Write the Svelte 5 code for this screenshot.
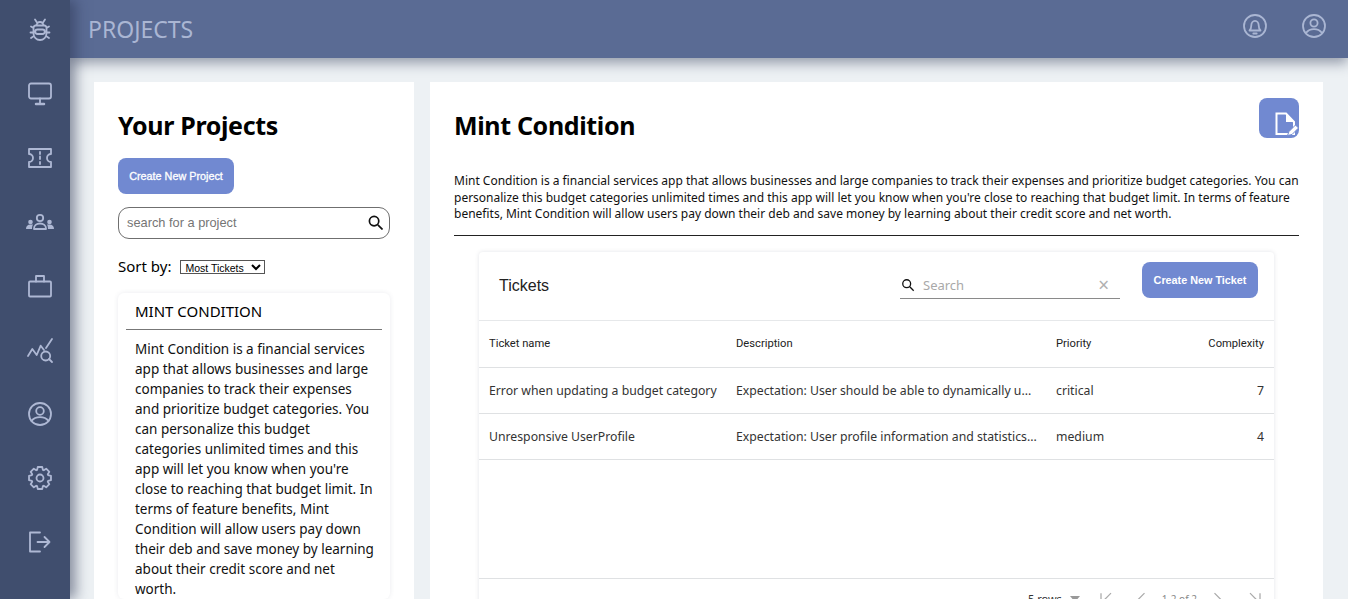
<script>
  const tickets = [
    { name: 'Error when updating a budget category', desc: 'Expectation: User should be able to dynamically u...', priority: 'critical', complexity: 7 },
    { name: 'Unresponsive UserProfile', desc: 'Expectation: User profile information and statistics...', priority: 'medium', complexity: 4 }
  ];
  const about = "Mint Condition is a financial services app that allows businesses and large companies to track their expenses and prioritize budget categories. You can personalize this budget categories unlimited times and this app will let you know when you're close to reaching that budget limit. In terms of feature benefits, Mint Condition will allow users pay down their deb and save money by learning about their credit score and net worth.";

  // eight toothed cog outline, centred on 12,12
  function cog() {
    const pts = [];
    for (let i = 0; i < 8; i++) {
      const a = (i * Math.PI) / 4 - Math.PI / 2;
      for (const [off, r] of [[-0.34, 8.6], [-0.2, 11.2], [0.2, 11.2], [0.34, 8.6]]) {
        pts.push(`${(12 + r * Math.cos(a + off)).toFixed(2)} ${(12 + r * Math.sin(a + off)).toFixed(2)}`);
      }
    }
    return 'M' + pts.join('L') + 'Z';
  }
</script>

<div class="shell">
  <nav class="side">
    <!-- bug -->
    <svg viewBox="0 0 24 24"><path d="M7.500 7.500h9a2.500 2.500 0 0 1 2 2.500v5.500a6.500 6.500 0 0 1-13 0V10a2.500 2.500 0 0 1 2-2.500zM8.500 7.500a3.500 3.500 0 0 1 7 0M9.500 11.500h5a1 1 0 0 1 0 4.500h-5a1 1 0 0 1 0-4.500zM9 4.500 7 1.500M15 4.500l2-3M5.500 10 3 8.500M18.500 10 21 8.500M5.500 14.500H2.500M18.500 14.500h3M6 18l-3 2M18 18l3 2"/></svg>
    <!-- monitor -->
    <svg viewBox="0 0 24 24"><rect x="1" y="1.500" width="22" height="15" rx="2"/><path d="M12 16.500V22"/><path class="thick" d="M8 22h8"/></svg>
    <!-- ticket -->
    <svg viewBox="0 0 24 24"><path d="M1 3h22v5a4 4 0 0 0 0 8v5H1v-5a4 4 0 0 0 0-8zM12 6v2M12 10.500V13M12 16v2"/></svg>
    <!-- team -->
    <svg viewBox="0 0 24 24"><circle cx="12" cy="8" r="3.200"/><path d="M6 19v-.5c0-3 2.500-5 6-5s6 2 6 5v.5z"/><circle class="fill" cx="2.500" cy="12" r="2.300"/><circle class="fill" cx="21.500" cy="12" r="2.300"/><path class="fill" d="M-2 19c0-2.800 1.700-4.500 4.500-4.500h2.500c-.7 1.200-1 2.800-1 4.500zM26 19c0-2.800-1.700-4.500-4.500-4.500H19c.7 1.200 1 2.800 1 4.500z"/></svg>
    <!-- briefcase -->
    <svg viewBox="0 0 24 24"><rect x="1" y="7.500" width="22" height="15" rx="1"/><path d="M8 7.500V2h8v5.500"/></svg>
    <!-- stats search -->
    <svg viewBox="0 0 24 24"><path d="M0 18 4.300 11l4.400 6 4-9.300L16 12M18 10l6-9"/><circle cx="17.700" cy="18" r="4.500"/><path d="m21 21 3 3"/></svg>
    <!-- profile -->
    <svg viewBox="0 0 24 24"><circle cx="12" cy="12" r="11"/><circle cx="12" cy="9" r="3.800"/><path d="M3.500 19c2-2.600 5-3.800 8.500-3.800s6.500 1.200 8.500 3.800"/></svg>
    <!-- gear -->
    <svg viewBox="0 0 24 24"><circle cx="12" cy="12" r="3.500"/><path d={cog()}/></svg>
    <!-- logout -->
    <svg viewBox="0 0 24 24"><path d="M12 2.500H2v19h10M9.500 12h12M16.500 7l5 5-5 5"/></svg>
  </nav>

  <div class="main">
    <header class="top">
      <span class="title">PROJECTS</span>
      <div class="top-icons">
        <svg viewBox="0 0 24 24"><circle cx="12" cy="12" r="11"/><path d="M6.500 16.500c1-1 1.800-2 1.800-5 0-2.500 1.500-4.700 3.700-4.700s3.700 2.200 3.700 4.700c0 3 .8 4 1.800 5zM10.300 19.500h3.400"/></svg>
        <svg viewBox="0 0 24 24"><circle cx="12" cy="12" r="11"/><circle cx="12" cy="9" r="3.600"/><path d="M4 19c2-2.600 4.700-3.800 8-3.800s6 1.200 8 3.800"/></svg>
      </div>
    </header>

    <div class="content">
      <section class="card left">
        <h1>Your Projects</h1>
        <button class="btn">Create New Project</button>
        <div class="search-box">
          <span>search for a project</span>
          <svg viewBox="0 0 16 16"><circle cx="6.500" cy="6.500" r="5"/><path d="m10.500 10.500 5 5"/></svg>
        </div>
        <div class="sort">
          <span>Sort by:</span>
          <select><option>Most Tickets</option></select>
        </div>
        <article class="project">
          <h2>MINT CONDITION</h2>
          <p>{about}</p>
        </article>
      </section>

      <section class="card right">
        <div class="head">
          <h1>Mint Condition</h1>
          <div class="edit">
            <svg viewBox="0 0 40 40"><path class="page" d="M17.500 15.500h9.500l8 8.500v12H17.500z"/><path class="fold" d="M27 15.500V24h8z"/><path class="pen" d="m28.500 37.500 1.500-4 6.500-6.500 3 3-6.500 6.500z"/></svg>
          </div>
        </div>
        <p class="about">{about}</p>
        <div class="table-card">
          <div class="bar">
            <span class="tickets">Tickets</span>
            <div class="t-search">
              <svg viewBox="0 0 16 16"><circle cx="6.500" cy="6.500" r="4.500"/><path d="m10 10 4.500 4.500"/></svg>
              <span>Search</span>
              <i>×</i>
            </div>
            <button class="btn wide">Create New Ticket</button>
          </div>
          <div class="row hdr">
            <span>Ticket name</span><span>Description</span><span>Priority</span><span class="num">Complexity</span>
          </div>
          {#each tickets as t}
            <div class="row">
              <span>{t.name}</span><span>{t.desc}</span><span>{t.priority}</span><span class="num">{t.complexity}</span>
            </div>
          {/each}
          <div class="empty"></div>
          <div class="pager">
            <span>5 rows</span>
            <svg class="caret" viewBox="0 0 10 6"><path d="M0 0h10L5 6z"/></svg>
            <svg class="first" viewBox="0 0 24 24"><path d="M6 5v14M18 5l-7 7 7 7"/></svg>
            <svg class="prev" viewBox="0 0 24 24"><path d="m15 5-7 7 7 7"/></svg>
            <span class="count">1-2 of 2</span>
            <svg class="next" viewBox="0 0 24 24"><path d="m9 5 7 7-7 7"/></svg>
            <svg class="last" viewBox="0 0 24 24"><path d="M18 5v14M6 5l7 7-7 7"/></svg>
          </div>
        </div>
      </section>
    </div>
  </div>
</div>

<style>
  :global(body) {
    margin: 0;
    overflow: hidden;
  }

  .shell {
    display: flex;
    height: 599px;
    overflow: hidden;
    font-family: "Noto Sans", "Open Sans", sans-serif;
    color: #000;
  }

  .side {
    position: relative;
    z-index: 2;
    flex: 0 0 70px;
    box-sizing: border-box;
    background: #404e6e;
    display: flex;
    flex-direction: column;
    align-items: center;
    gap: 40px;
    padding: 18px 0 0 10px;
    box-shadow: 6px 0 12px rgba(40, 50, 80, 0.5);
  }

  .side svg {
    flex: 0 0 24px;
    width: 24px;
    height: 24px;
    fill: none;
    stroke: #aeb8d4;
    stroke-width: 1.800;
    stroke-linecap: round;
    stroke-linejoin: round;
    overflow: visible;
  }

  .side svg .fill {
    fill: #aeb8d4;
    stroke: none;
  }

  .side svg .thick {
    stroke-width: 2.500;
  }

  .main {
    flex: 1;
    min-width: 0;
    display: flex;
    flex-direction: column;
    background: #edf1f4;
  }

  .top {
    position: relative;
    z-index: 1;
    flex: 0 0 58px;
    box-sizing: border-box;
    background: #5a6b94;
    display: flex;
    align-items: flex-start;
    justify-content: space-between;
    padding: 14px 22px 0 18px;
    box-shadow: 0 5px 12px rgba(40, 50, 80, 0.45);
  }

  .title {
    color: #aab6d3;
    font-size: 23px;
    line-height: 31px;
  }

  .top-icons {
    display: flex;
    gap: 35px;
  }

  .top-icons svg {
    width: 24px;
    height: 24px;
    fill: none;
    stroke: #aab6d3;
    stroke-width: 1.800;
    stroke-linecap: round;
    stroke-linejoin: round;
  }

  .content {
    flex: 1;
    min-height: 0;
    display: flex;
    align-items: flex-start;
    gap: 16px;
    padding: 24px 25px 0 24px;
  }

  .card {
    background: #fff;
    height: 700px;
    box-sizing: border-box;
  }

  .left {
    flex: 0 0 320px;
    padding: 25px 24px 0;
  }

  .right {
    flex: 1;
    min-width: 0;
    padding: 16px 24px 0;
  }

  h1 {
    margin: 0;
    font-size: 25px;
    letter-spacing: -0.35px;
    line-height: 36px;
    font-weight: 700;
  }

  .btn {
    display: block;
    flex: 0 0 auto;
    border: 0;
    border-radius: 8px;
    background: #7189d1;
    color: #fff;
    font-family: "Liberation Sans", sans-serif;
    font-size: 10.800px;
    font-weight: 700;
    width: 116px;
    height: 36px;
    padding: 0;
  }

  .left .btn {
    margin-top: 15px;
    font-weight: 400;
    -webkit-text-stroke: 0.3px #fff;
  }

  .search-box {
    margin-top: 13px;
    width: 272px;
    height: 32px;
    border: 1px solid #6f6f6f;
    border-radius: 11px;
    display: flex;
    align-items: center;
    justify-content: space-between;
    padding: 0 6px 2px 8px;
    box-sizing: border-box;
    font-family: "Liberation Sans", sans-serif;
    font-size: 12.800px;
    color: #757575;
  }

  .search-box svg {
    width: 15px;
    height: 15px;
    fill: none;
    stroke: #111;
    stroke-width: 1.800;
  }

  .sort {
    display: flex;
    align-items: center;
    gap: 9px;
    margin-top: 17px;
    font-size: 15px;
    line-height: 20px;
  }

  select {
    font-family: "Liberation Sans", sans-serif;
    font-size: 10.500px;
    height: 14px;
    width: 85px;
    padding: 0;
    border: 1px solid #555;
    border-radius: 0;
    background: #fff;
    margin-top: 2px;
  }

  .project {
    margin-top: 17px;
    padding: 6px 8px 0;
    width: 272px;
    box-sizing: border-box;
    border-radius: 6px;
    box-shadow: 0 0 5px rgba(60, 70, 100, 0.1);
  }

  .project h2 {
    margin: 0;
    padding: 0 9px 6px;
    font-size: 15px;
    line-height: 24px;
    font-weight: 400;
    border-bottom: 1px solid #777;
  }

  .project p {
    margin: 9px 0 0;
    padding: 0 5px 0 9px;
    font-size: 13.500px;
    line-height: 20px;
    color: #111;
  }

  .head {
    display: flex;
    justify-content: space-between;
    align-items: flex-start;
    height: 75px;
  }

  .head h1 {
    margin-top: 9px;
  }

  .edit {
    width: 40px;
    height: 40px;
    border-radius: 8px;
    background: #7189d1;
  }

  .edit svg {
    display: block;
    width: 40px;
    height: 40px;
  }

  .edit .page {
    fill: none;
    stroke: #fff;
    stroke-width: 2;
  }

  .edit .fold {
    fill: #fff;
  }

  .edit .pen {
    fill: #fff;
    stroke: #7189d1;
    stroke-width: 1;
  }

  .about {
    margin: 0;
    padding-bottom: 12px;
    border-bottom: 1px solid #222;
    font-size: 12px;
    line-height: 16.500px;
    color: #111;
  }

  .table-card {
    margin: 16px 25px 0;
    border-radius: 4px;
    box-shadow: 0 0 4px rgba(60, 70, 100, 0.15);
    display: flex;
    flex-direction: column;
    height: 400px;
  }

  .bar {
    display: flex;
    align-items: flex-start;
    box-sizing: border-box;
    height: 69px;
    border-bottom: 1px solid #e6e8ea;
    flex: 0 0 auto;
    padding: 10px 16px 0 20px;
  }

  .tickets {
    flex: 1;
    margin-top: 13px;
    font-size: 16px;
    line-height: 22px;
    color: #222;
    font-family: "Liberation Sans", sans-serif;
  }

  .t-search {
    display: flex;
    align-items: center;
    width: 220px;
    height: 26px;
    margin: 10px 22px 0 0;
    border-bottom: 1px solid #8a8a8a;
    color: #a9a9a9;
    font-size: 13px;
  }

  .t-search svg {
    width: 14px;
    height: 14px;
    margin: 0 8px 0 1px;
    fill: none;
    stroke: #111;
    stroke-width: 1.500;
  }

  .t-search span {
    flex: 1;
  }

  .t-search i {
    font-style: normal;
    font-size: 19px;
    line-height: 20px;
    margin-right: 11px;
    color: #b0b0b0;
  }

  .row {
    display: grid;
    grid-template-columns: 247px 320px 1fr 80px;
    align-items: center;
    height: 44px;
    padding: 1px 10px 0;
    border-bottom: 1px solid #dfe1e3;
    font-size: 12.250px;
    color: #333;
    flex: 0 0 auto;
  }

  .row.hdr {
    height: 46px;
    padding-top: 0;
    font-family: Roboto, sans-serif;
    font-size: 11.200px;
    color: #222;
    font-weight: 400;
  }

  .num {
    text-align: right;
  }

  .empty {
    flex: 0 0 118px;
    border-bottom: 1px solid #dfe1e3;
  }

  .pager {
    display: flex;
    align-items: center;
    padding: 10px 0 0 549px;
    font-size: 11px;
    color: #333;
  }

  .pager svg {
    flex: 0 0 20px;
    width: 20px;
    height: 20px;
    fill: none;
    stroke: #aaa;
    stroke-width: 1.500;
  }

  .pager svg.caret {
    flex: 0 0 10px;
    width: 10px;
    height: 6px;
    margin-left: 8px;
    fill: #999;
    stroke: none;
  }

  .pager svg.first {
    margin-left: 16px;
  }

  .pager svg.prev {
    margin-left: 16px;
  }

  .count {
    color: #888;
    margin-left: 10px;
    font-size: 10px;
  }

  .pager svg.next {
    margin-left: 10px;
  }

  .pager svg.last {
    margin-left: 18px;
  }
</style>
